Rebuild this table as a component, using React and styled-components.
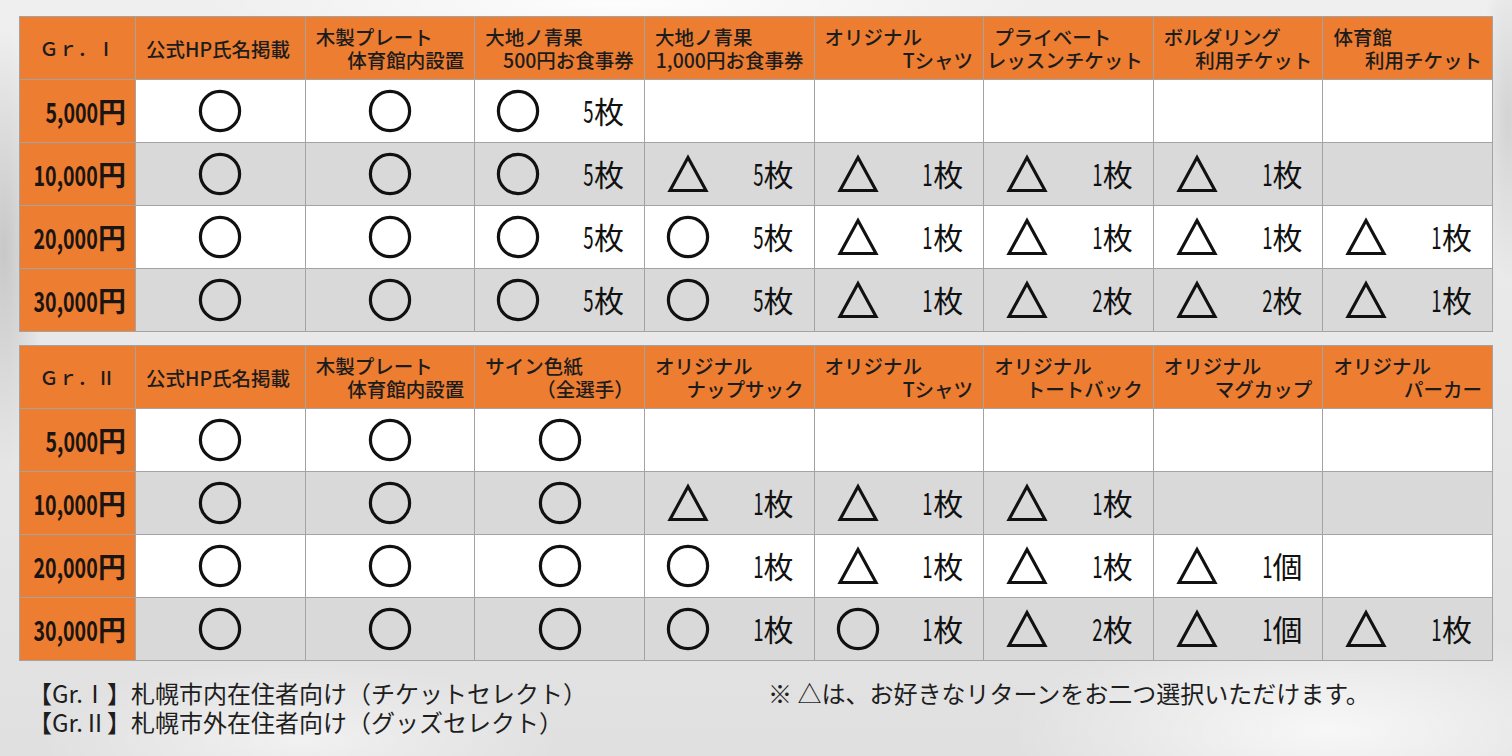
import React from 'react';
import styled, { createGlobalStyle } from 'styled-components';

const Global = createGlobalStyle`
  html, body { margin: 0; padding: 0; }
  body {
    font-family: "Noto Sans CJK JP", "Noto Sans", sans-serif;
    background: #e9e9e9;
  }
`;

const Page = styled.div`
  width: 1512px;
  height: 756px;
  box-sizing: border-box;
  padding: 16px 19px 0;
  overflow: hidden;
  display: flex;
  flex-direction: column;
  background:
    radial-gradient(ellipse 320px 110px at 1330px 730px, rgba(255,255,255,0.75), rgba(255,255,255,0)),
    radial-gradient(ellipse 260px 80px at 300px 740px, rgba(255,255,255,0.55), rgba(255,255,255,0)),
    radial-gradient(ellipse 420px 40px at 620px 4px, rgba(255,255,255,0.9), rgba(255,255,255,0)),
    radial-gradient(ellipse 40px 220px at 4px 250px, rgba(185,185,185,0.7), rgba(185,185,185,0)),
    radial-gradient(ellipse 30px 160px at 1508px 120px, rgba(200,200,200,0.7), rgba(200,200,200,0)),
    linear-gradient(180deg, #efefef 0%, #e6e6e6 60%, #e0e0e0 100%);
`;

const Grid = styled.div`
  display: grid;
  grid-template-columns: 115px repeat(8, minmax(0, 1fr));
  grid-template-rows: 62px repeat(4, 62px);
  gap: 1px;
  padding: 1px;
  background: #a3a3a3;
  & + & { margin-top: 13px; }
`;

const HeadCell = styled.div`
  background: #ed7d31;
  display: flex;
  flex-direction: column;
  justify-content: center;
  padding: 0 10px;
  color: #1c1c1c;
  font-size: 19.5px;
  font-weight: 500;
  line-height: 23px;
  white-space: nowrap;
`;

const HeadLine = styled.span`
  display: block;
  align-self: ${p => (p.$end ? 'flex-end' : 'flex-start')};
`;

const GroupCell = styled.div`
  background: #ed7d31;
  display: flex;
  align-items: center;
  justify-content: center;
  color: #1c1c1c;
  font-size: 19px;
  font-weight: 500;
  padding-bottom: 2px;
`;

const PriceCell = styled.div`
  background: #ed7d31;
  display: flex;
  align-items: center;
  justify-content: flex-end;
  padding-right: 9px;
  color: #1a1512;
  font-size: 28px;
  font-weight: 700;
  white-space: nowrap;
`;

const Narrow = styled.span`
  display: inline-block;
  transform: scaleX(${p => p.$s});
  transform-origin: right center;
`;

const BodyCell = styled.div`
  background: ${p => (p.$alt ? '#d9d9d9' : '#ffffff')};
  display: flex;
  align-items: center;
  justify-content: ${p => (p.$split ? 'space-between' : 'center')};
  padding: ${p => (p.$split ? '0 20px 0 21px' : '0')};
`;

const Count = styled.span`
  display: inline-flex;
  align-items: baseline;
  font-size: 30px;
  font-weight: 400;
  color: #111;
  line-height: 1;
  padding-bottom: 2px;
`;

const MarkBox = styled.span`
  display: inline-flex;
  align-items: center;
  justify-content: center;
`;

const Notes = styled.div`
  display: grid;
  grid-template-columns: 740px 1fr;
  margin-top: 17px;
  padding-left: 9px;
  font-size: 24px;
  line-height: 29px;
  color: #1e1e1e;
`;

const NoteCol = styled.div`
  display: flex;
  flex-direction: column;
  white-space: nowrap;
`;

const Mark = ({ type }) => (
  <MarkBox>
    {type === 'o' ? (
      <svg width="44" height="44" viewBox="0 0 44 44">
        <circle cx="22" cy="22" r="19.6" fill="none" stroke="#111" strokeWidth="3.2" />
      </svg>
    ) : (
      <svg width="44" height="40" viewBox="0 0 44 40">
        <path d="M22 3.6 L40 36.5 L4 36.5 Z" fill="none" stroke="#111" strokeWidth="3.1" strokeLinejoin="miter" />
      </svg>
    )}
  </MarkBox>
);

const Price = ({ value }) => (
  <PriceCell>
    <Narrow $s={0.7}>{value}</Narrow>円
  </PriceCell>
);

const Cell = ({ spec, alt }) => {
  if (!spec) return <BodyCell $alt={alt} />;
  const [mark, num, unit] = spec;
  if (!num) {
    return (
      <BodyCell $alt={alt}>
        <Mark type={mark} />
      </BodyCell>
    );
  }
  return (
    <BodyCell $alt={alt} $split>
      <Mark type={mark} />
      <Count>
        <Narrow $s={0.62}>{num}</Narrow>
        {unit}
      </Count>
    </BodyCell>
  );
};

const O = ['o'];
const o = (n, u = '枚') => ['o', n, u];
const t = (n, u = '枚') => ['t', n, u];

const tables = [
  {
    group: 'Ｇｒ．Ⅰ',
    headers: [
      ['公式HP氏名掲載'],
      ['木製プレート', '体育館内設置'],
      ['大地ノ青果', '500円お食事券'],
      ['大地ノ青果', '1,000円お食事券'],
      ['オリジナル', 'Tシャツ'],
      ['プライベート', 'レッスンチケット'],
      ['ボルダリング', '利用チケット'],
      ['体育館', '利用チケット'],
    ],
    rows: [
      ['5,000', [O, O, o('5'), null, null, null, null, null]],
      ['10,000', [O, O, o('5'), t('5'), t('1'), t('1'), t('1'), null]],
      ['20,000', [O, O, o('5'), o('5'), t('1'), t('1'), t('1'), t('1')]],
      ['30,000', [O, O, o('5'), o('5'), t('1'), t('2'), t('2'), t('1')]],
    ],
  },
  {
    group: 'Ｇｒ．Ⅱ',
    headers: [
      ['公式HP氏名掲載'],
      ['木製プレート', '体育館内設置'],
      ['サイン色紙', '（全選手）'],
      ['オリジナル', 'ナップサック'],
      ['オリジナル', 'Tシャツ'],
      ['オリジナル', 'トートバック'],
      ['オリジナル', 'マグカップ'],
      ['オリジナル', 'パーカー'],
    ],
    rows: [
      ['5,000', [O, O, O, null, null, null, null, null]],
      ['10,000', [O, O, O, t('1'), t('1'), t('1'), null, null]],
      ['20,000', [O, O, O, o('1'), t('1'), t('1'), t('1', '個'), null]],
      ['30,000', [O, O, O, o('1'), o('1'), t('2'), t('1', '個'), t('1')]],
    ],
  },
];

const Table = ({ data }) => (
  <Grid>
    <GroupCell>{data.group}</GroupCell>
    {data.headers.map((h, i) => (
      <HeadCell key={i}>
        <HeadLine>{h[0]}</HeadLine>
        {h[1] && <HeadLine $end>{h[1]}</HeadLine>}
      </HeadCell>
    ))}
    {data.rows.map(([price, cells], r) => (
      <React.Fragment key={r}>
        <Price value={price} />
        {cells.map((c, i) => (
          <Cell key={i} spec={c} alt={r % 2 === 1} />
        ))}
      </React.Fragment>
    ))}
  </Grid>
);

export default function App() {
  return (
    <>
      <Global />
      <Page>
        {tables.map((d, i) => (
          <Table key={i} data={d} />
        ))}
        <Notes>
          <NoteCol>
            <span>【Gr.Ⅰ】札幌市内在住者向け（チケットセレクト）</span>
            <span>【Gr.Ⅱ】札幌市外在住者向け（グッズセレクト）</span>
          </NoteCol>
          <NoteCol>
            <span>※ △は、お好きなリターンをお二つ選択いただけます。</span>
          </NoteCol>
        </Notes>
      </Page>
    </>
  );
}
